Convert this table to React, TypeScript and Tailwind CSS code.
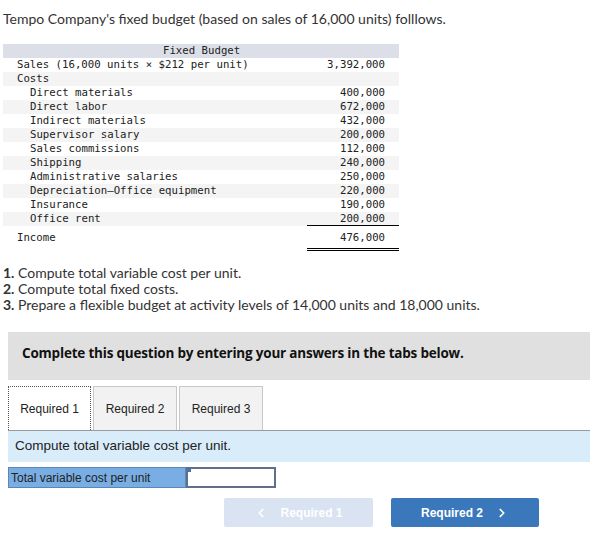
import { ChevronLeft, ChevronRight } from 'lucide-react'

const rows: { label: string; value: string; indent: boolean }[] = [
  { label: 'Sales (16,000 units × $212 per unit)', value: '3,392,000', indent: false },
  { label: 'Costs', value: '', indent: false },
  { label: 'Direct materials', value: '400,000', indent: true },
  { label: 'Direct labor', value: '672,000', indent: true },
  { label: 'Indirect materials', value: '432,000', indent: true },
  { label: 'Supervisor salary', value: '200,000', indent: true },
  { label: 'Sales commissions', value: '112,000', indent: true },
  { label: 'Shipping', value: '240,000', indent: true },
  { label: 'Administrative salaries', value: '250,000', indent: true },
  { label: 'Depreciation—Office equipment', value: '220,000', indent: true },
  { label: 'Insurance', value: '190,000', indent: true },
  { label: 'Office rent', value: '200,000', indent: true },
]

const mono = "font-['DejaVu_Sans_Mono','Liberation_Mono',monospace] text-[10.7px] leading-[14px] text-[#222]"

export default function App() {
  return (
    <div className="w-[590px] h-[550px] bg-white font-['Lato','Open_Sans',sans-serif] text-[#333]">
      <p className="pl-[3px] pt-[10px] text-[14px] leading-[18px]">
        Tempo Company's fixed budget (based on sales of 16,000 units) folllows.
      </p>

      {/* budget table */}
      <div className={`mt-[16px] ml-[3px] w-[396px] ${mono}`}>
        <div className="flex h-[14px] bg-[#dcdfe8]">
          <div className="w-[304px] pl-[160px]">Fixed Budget</div>
          <div className="flex-1" />
        </div>
        {rows.map((r, i) => (
          <div key={r.label} className={`flex h-[14px] ${i % 2 === 1 ? 'bg-[#f4f4f4]' : 'bg-white'}`}>
            <div className={`w-[304px] ${r.indent ? 'pl-[27px]' : 'pl-[14px]'}`}>{r.label}</div>
            <div className={`flex-1 pr-[14px] text-right ${i === rows.length - 1 ? 'border-b border-black' : ''}`}>
              {r.value}
            </div>
          </div>
        ))}
        <div className="flex pt-[5px]">
          <div className="w-[304px] pl-[14px]">Income</div>
          <div className="flex-1 pr-[14px] text-right border-b-[3px] border-double border-black pb-[3px]">476,000</div>
        </div>
      </div>

      <div className="mt-[14px] pl-[3px] text-[14px] leading-[16px]">
        <p><b>1.</b> Compute total variable cost per unit.</p>
        <p><b>2.</b> Compute total fixed costs.</p>
        <p><b>3.</b> Prepare a flexible budget at activity levels of 14,000 units and 18,000 units.</p>
      </div>

      <div className="mt-[19px] ml-[8px] h-[48px] bg-[#e0e0e0] pl-[14px] pt-[11px]">
        <p className="font-['Open_Sans',sans-serif] font-bold text-[13.5px] tracking-[-0.2px] text-[#111]">
          Complete this question by entering your answers in the tabs below.
        </p>
      </div>

      {/* tabs */}
      <div className="ml-[8px] mt-[6px] flex gap-[2px] font-['Liberation_Sans',Arial,sans-serif] text-[12px] text-[#222]">
        <div className="w-[83px] h-[44px] flex items-center justify-center bg-white border border-dotted border-b-0 border-[#555]">
          Required 1
        </div>
        <div className="w-[84px] h-[44px] flex items-center justify-center bg-[#f2f2f2] border border-b-0 border-[#c8c8c8]">
          Required 2
        </div>
        <div className="w-[84px] h-[44px] flex items-center justify-center bg-[#f2f2f2] border border-b-0 border-[#c8c8c8]">
          Required 3
        </div>
      </div>
      <div className="ml-[8px] h-[32px] bg-[#d9ecfa] border-t border-[#9a9a9a] pl-[7px] flex items-center font-['Liberation_Sans',Arial,sans-serif] text-[13.5px] text-[#222]">
        Compute total variable cost per unit.
      </div>

      <div className="ml-[8px] mt-[5px] flex h-[21px] font-['Liberation_Sans',Arial,sans-serif] text-[12px] text-[#222]">
        <div className="w-[178px] bg-[#79aee4] border border-[#5d86b8] pl-[2px] flex items-center">
          Total variable cost per unit
        </div>
        <div className="relative w-[90px] bg-white border-2 border-[#5f6f8c]">
          <span className="absolute left-0 top-0 w-[3px] h-[3px] bg-[#3a77bb]" />
        </div>
      </div>

      <div className="mt-[10px] flex gap-[18px] pl-[224px] font-['Liberation_Sans',Arial,sans-serif] font-bold text-[12px] text-white">
        <div className="w-[149px] h-[29px] rounded-[2px] bg-[#d9e3f1] flex items-center justify-center gap-[12px]">
          <ChevronLeft size={14} strokeWidth={3} />
          <span>Required 1</span>
        </div>
        <div className="w-[148px] h-[29px] rounded-[2px] bg-[#3a77bb] flex items-center justify-center gap-[12px]">
          <span>Required 2</span>
          <ChevronRight size={14} strokeWidth={3} />
        </div>
      </div>
    </div>
  )
}
